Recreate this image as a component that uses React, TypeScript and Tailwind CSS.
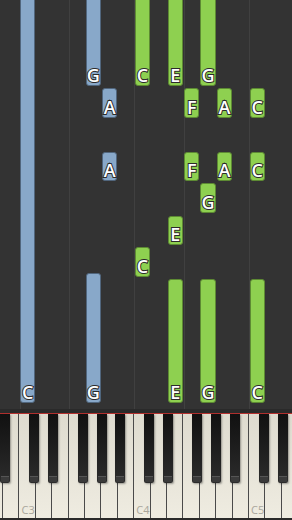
const KEY = 16.4;
const ORIGIN = -13.3; // left edge of A2
const LETTERS = ["C", "D", "E", "F", "G", "A", "B"];

// white-key index counted from A2
function whiteIdx(note: string) {
  const letter = note[0];
  const oct = Number(note.slice(1));
  return (oct - 2) * 7 + LETTERS.indexOf(letter) - 5;
}
const keyX = (note: string) => ORIGIN + whiteIdx(note) * KEY;

type Note = { n: string; top: number; bottom: number; hand: "l" | "r" };

const notes: Note[] = [
  { n: "C3", top: -10, bottom: 403, hand: "l" },
  { n: "G3", top: -10, bottom: 86, hand: "l" },
  { n: "A3", top: 88, bottom: 118, hand: "l" },
  { n: "A3", top: 152, bottom: 181, hand: "l" },
  { n: "G3", top: 273, bottom: 403, hand: "l" },
  { n: "C4", top: -10, bottom: 86, hand: "r" },
  { n: "E4", top: -10, bottom: 86, hand: "r" },
  { n: "G4", top: -10, bottom: 86, hand: "r" },
  { n: "F4", top: 88, bottom: 118, hand: "r" },
  { n: "A4", top: 88, bottom: 118, hand: "r" },
  { n: "C5", top: 88, bottom: 118, hand: "r" },
  { n: "F4", top: 152, bottom: 181, hand: "r" },
  { n: "A4", top: 152, bottom: 181, hand: "r" },
  { n: "C5", top: 152, bottom: 181, hand: "r" },
  { n: "G4", top: 183, bottom: 213, hand: "r" },
  { n: "E4", top: 216, bottom: 245, hand: "r" },
  { n: "C4", top: 247, bottom: 277, hand: "r" },
  { n: "E4", top: 279, bottom: 403, hand: "r" },
  { n: "G4", top: 279, bottom: 403, hand: "r" },
  { n: "C5", top: 279, bottom: 403, hand: "r" },
];

const gridLines = ["C3", "F3", "C4", "F4", "C5"];

const whiteKeys = [
  "A2", "B2", "C3", "D3", "E3", "F3", "G3", "A3", "B3",
  "C4", "D4", "E4", "F4", "G4", "A4", "B4", "C5", "D5", "E5",
];

// black key: the white key it follows, offset of its left edge from the boundary
const blackOffset: Record<string, number> = { C: -7, D: -4, F: -7.5, G: -5, A: -3 };
const blackKeys = whiteKeys.filter((k) => k[0] in blackOffset);

export default function App() {
  return (
    <div className="flex h-[520px] w-[292px] flex-col overflow-hidden bg-[#333333] font-['Open_Sans',sans-serif]">
      <div className="relative h-[409px] shrink-0">
        {gridLines.map((g) => (
          <div
            key={g}
            className="absolute top-0 h-full w-px bg-[#404040]"
            style={{ left: keyX(g) }}
          />
        ))}
        {notes.map((note, i) => (
          <div
            key={i}
            className={
              "absolute flex items-end justify-center rounded-[3px] border pb-[1px] " +
              (note.hand === "l"
                ? "border-[#51667d] bg-[#88a8c9]"
                : "border-[#5d8a33] bg-[#8ed050]")
            }
            style={{
              left: keyX(note.n) + 0.5,
              width: KEY - 1,
              top: note.top,
              height: note.bottom - note.top,
            }}
          >
            <span className="text-[18px] leading-[18px] font-semibold text-white [-webkit-text-stroke:2px_#2b2b2b] [paint-order:stroke_fill]">
              {note.n[0]}
            </span>
          </div>
        ))}
      </div>

      <div className="h-[4px] shrink-0 bg-[#2a2a2a]" />
      <div className="h-px shrink-0 bg-[#b3302e]" />

      <div className="relative flex-1 border-b-2 border-[#2a2a2a]">
        <div className="ml-[-13.3px] flex h-full">
          {whiteKeys.map((k) => (
            <div
              key={k}
              className="flex h-full w-[16.4px] shrink-0 items-end border-r border-[#4a4a4a] bg-gradient-to-b from-[#dedbcf] to-[#efece1] pb-[3px] pl-[2px]"
            >
              {k[0] === "C" && (
                <span className="text-[11px] leading-[11px] text-[#a9a69c]">{k}</span>
              )}
            </div>
          ))}
        </div>
        {blackKeys.map((k) => (
          <div
            key={k}
            className="absolute top-0 flex h-[69px] w-[10px] flex-col justify-end rounded-b-[2px] bg-gradient-to-b from-[#111111] via-[#1e1e1e] to-[#2c2c2c] shadow-[1px_1px_2px_rgba(0,0,0,0.35)]"
            style={{ left: keyX(k) + KEY + blackOffset[k[0]] }}
          >
            <div className="mx-[1px] mb-[1px] h-[6px] rounded-b-[1px] border-t border-[#555555] bg-[#3a3a3a]" />
          </div>
        ))}
      </div>
    </div>
  );
}
